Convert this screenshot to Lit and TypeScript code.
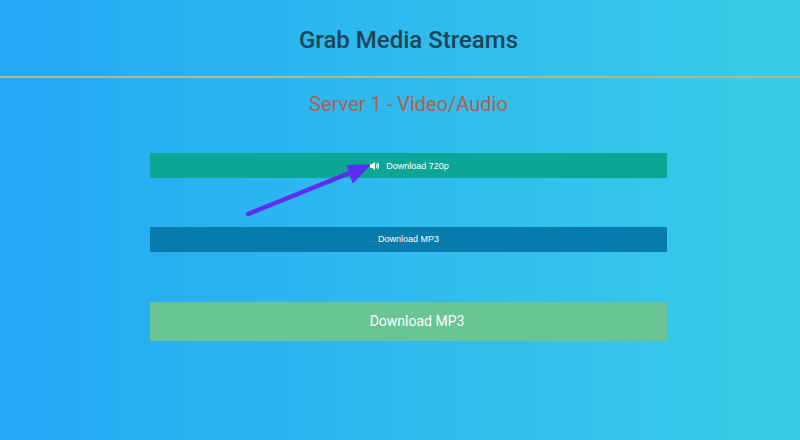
import { LitElement, html, css } from "lit";
import { customElement } from "lit/decorators.js";

@customElement("app-root")
export class AppRoot extends LitElement {
  static styles = css`
    :host {
      display: block;
      position: relative;
      width: 800px;
      height: 440px;
      overflow: hidden;
      background: linear-gradient(90deg, #25a8f5 0%, #38cde6 100%);
      font-family: Roboto, "Open Sans", sans-serif;
    }
    header {
      height: 76px;
      box-sizing: border-box;
      padding: 24px 0 0 150px;
    }
    h1 {
      width: 517px;
      margin: 0;
      text-align: center;
      font-size: 24px;
      line-height: 32px;
      font-weight: 500;
      color: #1d4557;
    }
    .rule {
      height: 2px;
      background: #b4b98c;
    }
    main {
      width: 517px;
      margin-left: 150px;
      display: flex;
      flex-direction: column;
      align-items: stretch;
    }
    h2 {
      margin: 12px 0 0;
      text-align: center;
      font-size: 20px;
      line-height: 28px;
      font-weight: 400;
      color: #b0604f;
    }
    .btn {
      display: flex;
      align-items: center;
      justify-content: center;
      color: #fff;
      font-family: "Liberation Sans", Arial, sans-serif;
      font-size: 9px;
    }
    .b1 {
      margin-top: 35px;
      height: 25px;
      background: #0aa796;
      gap: 7px;
      padding-left: 2px;
    }
    .b2 {
      margin-top: 49px;
      height: 25px;
      background: #077bab;
      padding-bottom: 1px;
      box-sizing: border-box;
    }
    .b3 {
      margin-top: 50px;
      height: 39px;
      background: #69c595;
      font-family: Roboto, sans-serif;
      font-size: 14px;
      padding: 0 0 2px 17px;
      box-sizing: border-box;
    }
    .speaker { width: 9px; height: 10px; display: block; }
    .arrow {
      position: absolute;
      left: 0;
      top: 0;
      width: 800px;
      height: 440px;
      pointer-events: none;
    }
  `;

  render() {
    return html`
      <header><h1>Grab Media Streams</h1></header>
      <div class="rule"></div>
      <main>
        <h2>Server 1 - Video/Audio</h2>
        <div class="btn b1">
          <svg class="speaker" viewBox="0 0 9 10" fill="#fff">
            <path d="M0 3.2h1.8L5 1v8L1.8 6.8H0z" />
            <path d="M6.1 3.4a2.2 2.2 0 0 1 0 3.2" fill="none" stroke="#fff" stroke-width="1.2" />
            <path d="M7.2 2a4 4 0 0 1 0 6" fill="none" stroke="#fff" stroke-width="1.2" />
          </svg>
          <span>Download 720p</span>
        </div>
        <div class="btn b2">Download MP3</div>
        <div class="btn b3">Download MP3</div>
      </main>
      <svg class="arrow" viewBox="0 0 800 440">
        <line x1="248" y1="214" x2="352" y2="172" stroke="#5f2cf2" stroke-width="4.5" stroke-linecap="round" />
        <path d="M347 165.5L370 165L353 183Z" fill="#5f2cf2" stroke="#5f2cf2" stroke-width="1" stroke-linejoin="round" />
      </svg>
    `;
  }
}
